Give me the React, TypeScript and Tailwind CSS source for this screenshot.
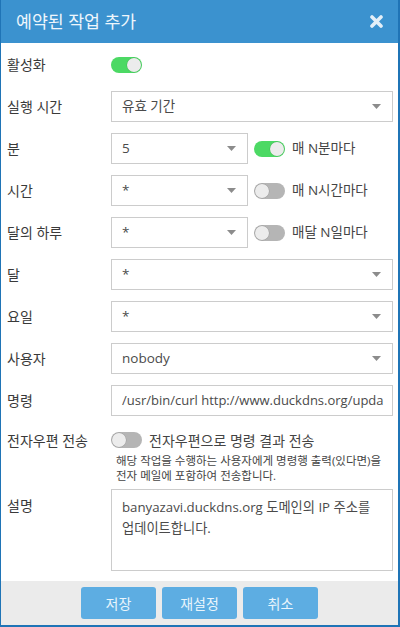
import React from "react";

function Toggle({ on }: { on: boolean }) {
  return (
    <div
      className={`relative w-[31px] h-[16px] rounded-full shrink-0 ${
        on ? "bg-[#4cd964]" : "bg-[#b5b5b5]"
      }`}
    >
      <div
        className={`absolute top-[1px] w-[14px] h-[14px] rounded-full bg-[#ececec] shadow-[0_0_0_0.5px_rgba(0,0,0,0.15)] ${
          on ? "right-[1px]" : "left-[1px]"
        }`}
      />
    </div>
  );
}

function Caret() {
  return (
    <svg width="9" height="5" viewBox="0 0 9 5" className="shrink-0">
      <path d="M0 0 L9 0 L4.5 5 Z" fill="#8c8c8c" />
    </svg>
  );
}

function Select({ value, narrow }: { value: string; narrow?: boolean }) {
  return (
    <div
      className={`h-[31px] border border-[#cccccc] bg-white flex items-center justify-between pl-[10px] pr-[11px] text-[13.5px] text-[#4a4a4a] ${
        narrow ? "w-[137px]" : "flex-1"
      }`}
    >
      <span>{value}</span>
      <Caret />
    </div>
  );
}

function Row({ label, children }: { label: string; children: React.ReactNode }) {
  return (
    <div className="flex items-center h-[31px] mb-[11px]">
      <div className="w-[104px] shrink-0 text-[14px] text-[#3a3a3a]">{label}</div>
      <div className="flex-1 min-w-0 flex items-center">{children}</div>
    </div>
  );
}

function Repeat({ value, on, text }: { value: string; on: boolean; text: string }) {
  return (
    <>
      <Select value={value} narrow />
      <div className="ml-[6px] flex items-center gap-[7px]">
        <Toggle on={on} />
        <span className="text-[13.5px] text-[#444]">{text}</span>
      </div>
    </>
  );
}

export default function App() {
  return (
    <div className="w-[400px] h-[627px] flex flex-col border-l border-r-2 border-b-2 border-[#1f74b6] bg-white overflow-hidden font-['Open_Sans','Noto_Sans_CJK_KR',sans-serif]">
      {/* Header */}
      <div className="h-[43px] shrink-0 bg-[#3b92cf] flex items-center justify-between pl-[15px] pr-[15px]">
        <span className="text-[17.3px] text-[#eef6fc]">예약된 작업 추가</span>
        <svg width="13" height="13" viewBox="0 0 13 13">
          <path d="M2 2 L11 11 M11 2 L2 11" stroke="#e3eff8" strokeWidth="3.6" strokeLinecap="round" />
        </svg>
      </div>

      {/* Body */}
      <div className="flex-1 pt-[6px] pl-[6px] pr-[5px]">
        <Row label="활성화">
          <Toggle on />
        </Row>
        <Row label="실행 시간">
          <Select value="유효 기간" />
        </Row>
        <Row label="분">
          <Repeat value="5" on text="매 N분마다" />
        </Row>
        <Row label="시간">
          <Repeat value="*" on={false} text="매 N시간마다" />
        </Row>
        <Row label="달의 하루">
          <Repeat value="*" on={false} text="매달 N일마다" />
        </Row>
        <Row label="달">
          <Select value="*" />
        </Row>
        <Row label="요일">
          <Select value="*" />
        </Row>
        <Row label="사용자">
          <Select value="nobody" />
        </Row>
        <Row label="명령">
          <div className="flex-1 min-w-0 h-[31px] border border-[#cccccc] flex items-center pl-[10px] text-[13px] text-[#4a4a4a] overflow-hidden whitespace-nowrap">
            /usr/bin/curl http://www.duckdns.org/upda
          </div>
        </Row>

        {/* Email */}
        <div className="flex">
          <div className="w-[104px] shrink-0 h-[26px] flex items-center text-[14px] text-[#3a3a3a]">
            전자우편 전송
          </div>
          <div className="flex-1">
            <div className="h-[26px] flex items-center gap-[7px]">
              <Toggle on={false} />
              <span className="text-[14px] text-[#444]">전자우편으로 명령 결과 전송</span>
            </div>
            <div className="ml-[5px] text-[11.5px] leading-[15px] text-[#444]">
              해당 작업을 수행하는 사용자에게 명령행 출력(있다면)을
              <br />
              전자 메일에 포함하여 전송합니다.
            </div>
          </div>
        </div>

        {/* Description */}
        <div className="flex mt-[6px]">
          <div className="w-[104px] shrink-0 pt-[6px] text-[14px] text-[#3a3a3a]">설명</div>
          <div className="flex-1 h-[82px] border border-[#cccccc] pt-[7px] pl-[10px] pr-[8px] text-[13.25px] leading-[21px] text-[#4a4a4a] break-keep">
            banyazavi.duckdns.org 도메인의 IP 주소를 업데이트합니다.
          </div>
        </div>
      </div>

      {/* Footer */}
      <div className="h-[44px] shrink-0 bg-[#ebebeb] flex items-center justify-center gap-[6px]">
        {["저장", "재설정", "취소"].map((t) => (
          <button
            key={t}
            className="w-[75px] h-[32px] rounded-[3px] bg-[#5dade2] text-[14px] text-[#eaf5fc]"
          >
            {t}
          </button>
        ))}
      </div>
    </div>
  );
}
